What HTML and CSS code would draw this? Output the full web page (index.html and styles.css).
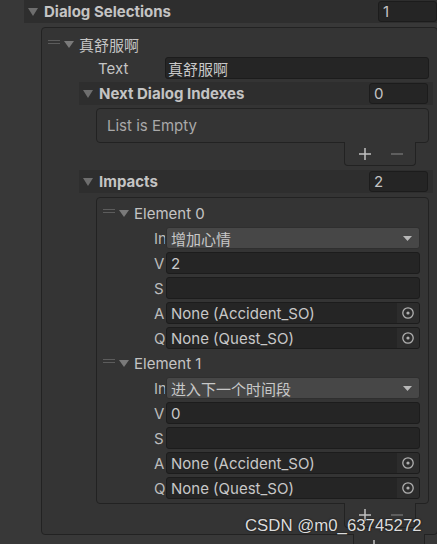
FILE: index.html
```html
<!DOCTYPE html>
<html>
<head>
<meta charset="utf-8">
<link rel="stylesheet" href="styles.css">
</head>
<body>
<div class="inspector">
  <div class="array top">
    <div class="band">
      <svg class="fold" viewBox="0 0 10 8"><polygon points="0,0 10,0 5,8"/></svg>
      <span class="band-title">Dialog Selections</span>
      <span class="count">1</span>
    </div>
    <div class="list outer">
      <div class="row head">
        <svg class="handle" viewBox="0 0 12 22"><path d="M0 7.5h12M0 10.5h12"/></svg>
        <svg class="efold" viewBox="0 0 10 7"><polygon points="0,0 10,0 5,7"/></svg>
        <span class="cjk etitle">真舒服啊</span>
      </div>
      <div class="row prop textrow">
        <span class="label wide">Text</span>
        <div class="field tight"><span class="cjk">真舒服啊</span></div>
      </div>
      <div class="array nested first">
        <div class="band">
          <svg class="fold" viewBox="0 0 10 8"><polygon points="0,0 10,0 5,8"/></svg>
          <span class="band-title">Next Dialog Indexes</span>
          <span class="count">0</span>
        </div>
        <div class="list empty">List is Empty</div>
        <div class="footer short">
          <svg class="plus" viewBox="0 0 12 12"><path d="M6 0v12M0 6h12"/></svg>
          <svg class="minus" viewBox="0 0 12 12"><path d="M0 6h12"/></svg>
        </div>
      </div>
      <div class="array nested impacts">
        <div class="band">
          <svg class="fold" viewBox="0 0 10 8"><polygon points="0,0 10,0 5,8"/></svg>
          <span class="band-title">Impacts</span>
          <span class="count">2</span>
        </div>
        <div class="list inner">
          <div class="row head">
            <svg class="handle" viewBox="0 0 12 22"><path d="M0 7.5h12M0 10.5h12"/></svg>
            <svg class="efold" viewBox="0 0 10 7"><polygon points="0,0 10,0 5,7"/></svg>
            <span class="etitle">Element 0</span>
          </div>
          <div class="row prop">
            <span class="label">In</span>
            <div class="field popup"><span class="cjk val">增加心情</span><svg class="arrow" viewBox="0 0 9 5"><polygon points="0,0 9,0 4.5,5"/></svg></div>
          </div>
          <div class="row prop">
            <span class="label">V</span>
            <div class="field">2</div>
          </div>
          <div class="row prop">
            <span class="label">S</span>
            <div class="field"></div>
          </div>
          <div class="row prop">
            <span class="label">A</span>
            <div class="field obj"><span class="val">None (Accident_SO)</span><span class="pick"><svg viewBox="0 0 12 12"><circle cx="6" cy="6" r="5.2"/><circle class="dot" cx="6" cy="6" r="1.6"/></svg></span></div>
          </div>
          <div class="row prop">
            <span class="label">Q</span>
            <div class="field obj"><span class="val">None (Quest_SO)</span><span class="pick"><svg viewBox="0 0 12 12"><circle cx="6" cy="6" r="5.2"/><circle class="dot" cx="6" cy="6" r="1.6"/></svg></span></div>
          </div>
          <div class="row head">
            <svg class="handle" viewBox="0 0 12 22"><path d="M0 7.5h12M0 10.5h12"/></svg>
            <svg class="efold" viewBox="0 0 10 7"><polygon points="0,0 10,0 5,7"/></svg>
            <span class="etitle">Element 1</span>
          </div>
          <div class="row prop">
            <span class="label">In</span>
            <div class="field popup"><span class="cjk val">进入下一个时间段</span><svg class="arrow" viewBox="0 0 9 5"><polygon points="0,0 9,0 4.5,5"/></svg></div>
          </div>
          <div class="row prop">
            <span class="label">V</span>
            <div class="field">0</div>
          </div>
          <div class="row prop">
            <span class="label">S</span>
            <div class="field"></div>
          </div>
          <div class="row prop">
            <span class="label">A</span>
            <div class="field obj"><span class="val">None (Accident_SO)</span><span class="pick"><svg viewBox="0 0 12 12"><circle cx="6" cy="6" r="5.2"/><circle class="dot" cx="6" cy="6" r="1.6"/></svg></span></div>
          </div>
          <div class="row prop">
            <span class="label">Q</span>
            <div class="field obj"><span class="val">None (Quest_SO)</span><span class="pick"><svg viewBox="0 0 12 12"><circle cx="6" cy="6" r="5.2"/><circle class="dot" cx="6" cy="6" r="1.6"/></svg></span></div>
          </div>
        </div>
        <div class="footer">
          <svg class="plus" viewBox="0 0 12 12"><path d="M6 0v12M0 6h12"/></svg>
          <svg class="minus" viewBox="0 0 12 12"><path d="M0 6h12"/></svg>
        </div>
      </div>
    </div>
    <div class="footer">
      <svg class="plus" viewBox="0 0 12 12"><path d="M6 0v12M0 6h12"/></svg>
      <svg class="minus" viewBox="0 0 12 12"><path d="M0 6h12"/></svg>
    </div>
  </div>
</div>
<div class="watermark">CSDN @m0_63745272</div>
</body>
</html>
```

FILE: styles.css
```css
html, body {
  margin: 0;
  padding: 0;
  background: #383838;
  overflow: hidden;
}
body {
  width: 437px;
  height: 544px;
  position: relative;
  font-family: Inter, "Noto Sans CJK SC", sans-serif;
  font-size: 15px;
  color: #c4c4c4;
}
.cjk {
  font-family: "Noto Sans CJK SC", sans-serif;
  font-size: 15px;
}
.inspector {
  margin-left: 24px;
  width: 418px;
}
.band {
  display: flex;
  align-items: center;
  height: 23px;
  background: #2e2e2e;
}
.fold {
  width: 10px;
  height: 8px;
  margin-left: 4px;
  flex: none;
  fill: #6e6e6e;
}
.band-title {
  margin-left: 6px;
  font-weight: 700;
  flex: 1;
  white-space: nowrap;
}
.count {
  width: 59px;
  height: 21px;
  box-sizing: border-box;
  margin-right: 5px;
  background: #252525;
  border: 1px solid #1c1c1c;
  border-radius: 3px;
  padding-left: 4px;
  line-height: 19px;
  flex: none;
}
.list {
  margin: 4px 4px 0 17px;
  border: 1px solid #222222;
  border-radius: 4px;
  background: #343434;
}
.outer {
  padding: 5px 0 6px 0;
}
.row {
  display: flex;
  align-items: center;
  height: 22px;
}
.head {
  padding-left: 6px;
}
.handle {
  width: 12px;
  height: 22px;
  flex: none;
  stroke: #5c5c5c;
  stroke-width: 1;
}
.efold {
  width: 10px;
  height: 7px;
  margin-left: 4px;
  flex: none;
  fill: #7a7a7a;
}
.etitle {
  margin-left: 5px;
  white-space: nowrap;
}
.prop {
  margin-right: 8px;
}
.textrow {
  margin-top: 2px;
}
.label {
  width: 11px;
  margin-left: 57px;
  margin-right: 1px;
  overflow: hidden;
  white-space: nowrap;
  flex: none;
  color: #bcbcbc;
}
.label.wide {
  width: 67px;
  margin-left: 56px;
  margin-right: 0;
  color: #c4c4c4;
}
.field {
  flex: 1;
  height: 22px;
  box-sizing: border-box;
  background: #252525;
  border: 1px solid #1c1c1c;
  border-radius: 3px;
  padding-left: 4px;
  display: flex;
  align-items: center;
  white-space: nowrap;
  overflow: hidden;
  color: #c8c8c8;
}
.field.tight {
  padding-left: 2px;
}
.field .val {
  flex: 1;
}
.popup {
  background: #474747;
  border-color: #2f2f2f;
}
.arrow {
  width: 9px;
  height: 5px;
  margin-right: 7px;
  fill: #b8b8b8;
  flex: none;
}
.obj {
  padding-right: 0;
}
.pick {
  width: 22px;
  height: 20px;
  background: #2c2c2c;
  display: flex;
  align-items: center;
  justify-content: center;
  flex: none;
}
.pick svg {
  width: 12px;
  height: 12px;
  fill: none;
  stroke: #b0b0b0;
  stroke-width: 1.3;
}
.pick svg .dot {
  fill: #b0b0b0;
  stroke: none;
}
.nested {
  margin-left: 37px;
  margin-right: 4px;
}
.nested.first {
  margin-top: 3px;
}
.nested.first .list {
  margin-top: 3px;
}
.nested.impacts {
  margin-top: 4px;
}
.empty {
  height: 35px;
  box-sizing: border-box;
  padding-left: 10px;
  display: flex;
  align-items: center;
  color: #a9a9a9;
}
.inner {
  display: flex;
  flex-direction: column;
  gap: 3px;
  padding: 4px 0 4px 0;
}
.footer {
  position: relative;
  margin: -1px 17px 0 auto;
  width: 72px;
  height: 25px;
  box-sizing: border-box;
  border: 1px solid #222222;
  border-top: none;
  border-radius: 0 0 4px 4px;
  background: #343434;
  display: flex;
  align-items: center;
  padding-left: 14px;
  gap: 20px;
}
.footer.short {
  height: 24px;
}
.plus {
  width: 12px;
  height: 12px;
  stroke: #c0c0c0;
  stroke-width: 1.5;
  flex: none;
}
.minus {
  width: 12px;
  height: 12px;
  stroke: #6c6c6c;
  stroke-width: 1.5;
  flex: none;
}
.watermark {
  position: absolute;
  left: 245px;
  top: 517px;
  font-family: "Liberation Sans", Arial, sans-serif;
  font-size: 16.8px;
  line-height: 17px;
  color: #dcdcdc;
  white-space: nowrap;
  text-shadow: 0 0 2px #1a1a1a, 0 0 1px #1a1a1a;
}
```
